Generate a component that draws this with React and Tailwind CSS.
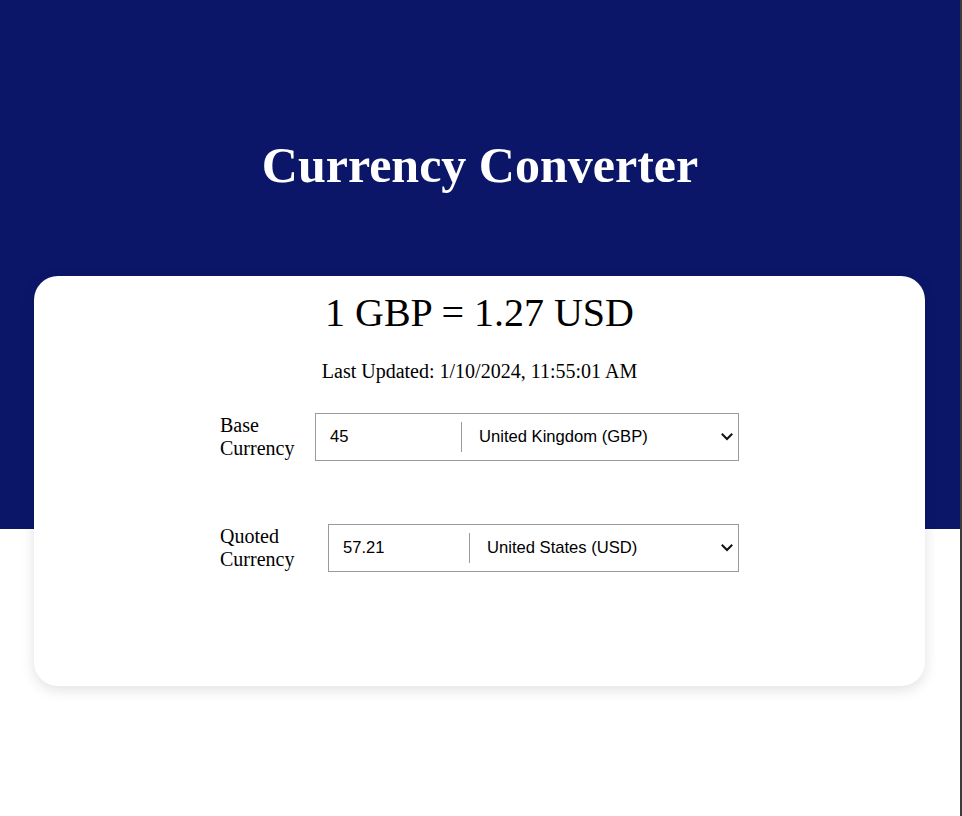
import React from 'react'

const serif = { fontFamily: '"Liberation Serif", "Times New Roman", serif' }

const Chevron = () => (
  <svg width="12" height="8" viewBox="0 0 12 8" fill="none">
    <path d="M1.5 1.5 L6 6 L10.5 1.5" stroke="#111" strokeWidth="2" strokeLinecap="square" />
  </svg>
)

const CurrencyRow = ({ label, labelW, boxW, numW, amount, country }) => (
  <div className="flex items-center">
    <div className={'text-[20px] leading-[23px] text-black ' + labelW} style={serif}>
      {label[0]}
      <br />
      {label[1]}
    </div>
    <div
      className={'flex items-center h-[48px] border border-[#9a9a9a] bg-white font-["Liberation_Sans",Arial,sans-serif] text-[16.6px] text-black ' + boxW}
    >
      <div className={'pl-[14px] ' + numW}>{amount}</div>
      <div className="w-px h-[30px] bg-[#9a9a9a]" />
      <div className="flex-1 flex items-center justify-between pl-[17px] pr-[5px]">
        <span>{country}</span>
        <Chevron />
      </div>
    </div>
  </div>
)

export default function App() {
  return (
    <div className="flex min-h-[816px] w-[962px] bg-white">
      <div className="w-[960px]">
        <div className="h-[529px] bg-[#0b1669] pt-[137px]">
          <h1 className="text-center text-white font-bold text-[50px] leading-[57px]" style={serif}>
            Currency Converter
          </h1>
        </div>
        <div
          className="-mt-[253px] mx-[34px] w-[891px] h-[410px] bg-white rounded-[24px] shadow-[0_4px_14px_rgba(0,0,0,0.12)] pt-[14px]"
          style={serif}
        >
          <div className="text-center text-[40px] leading-[46px] text-black">1 GBP = 1.27 USD</div>
          <div className="mt-[24px] text-center text-[20px] leading-[23px] text-black">
            Last Updated: 1/10/2024, 11:55:01 AM
          </div>
          <div className="mt-[30px] mx-auto w-[519px] flex flex-col gap-[63px]">
            <CurrencyRow
              label={['Base', 'Currency']}
              labelW="w-[95px]"
              boxW="w-[424px]"
              numW="w-[145px]"
              amount="45"
              country="United Kingdom (GBP)"
            />
            <CurrencyRow
              label={['Quoted', 'Currency']}
              labelW="w-[108px]"
              boxW="w-[411px]"
              numW="w-[140px]"
              amount="57.21"
              country="United States (USD)"
            />
          </div>
        </div>
      </div>
      <div className="w-[2px] bg-[#3c3c3c]" />
    </div>
  )
}
